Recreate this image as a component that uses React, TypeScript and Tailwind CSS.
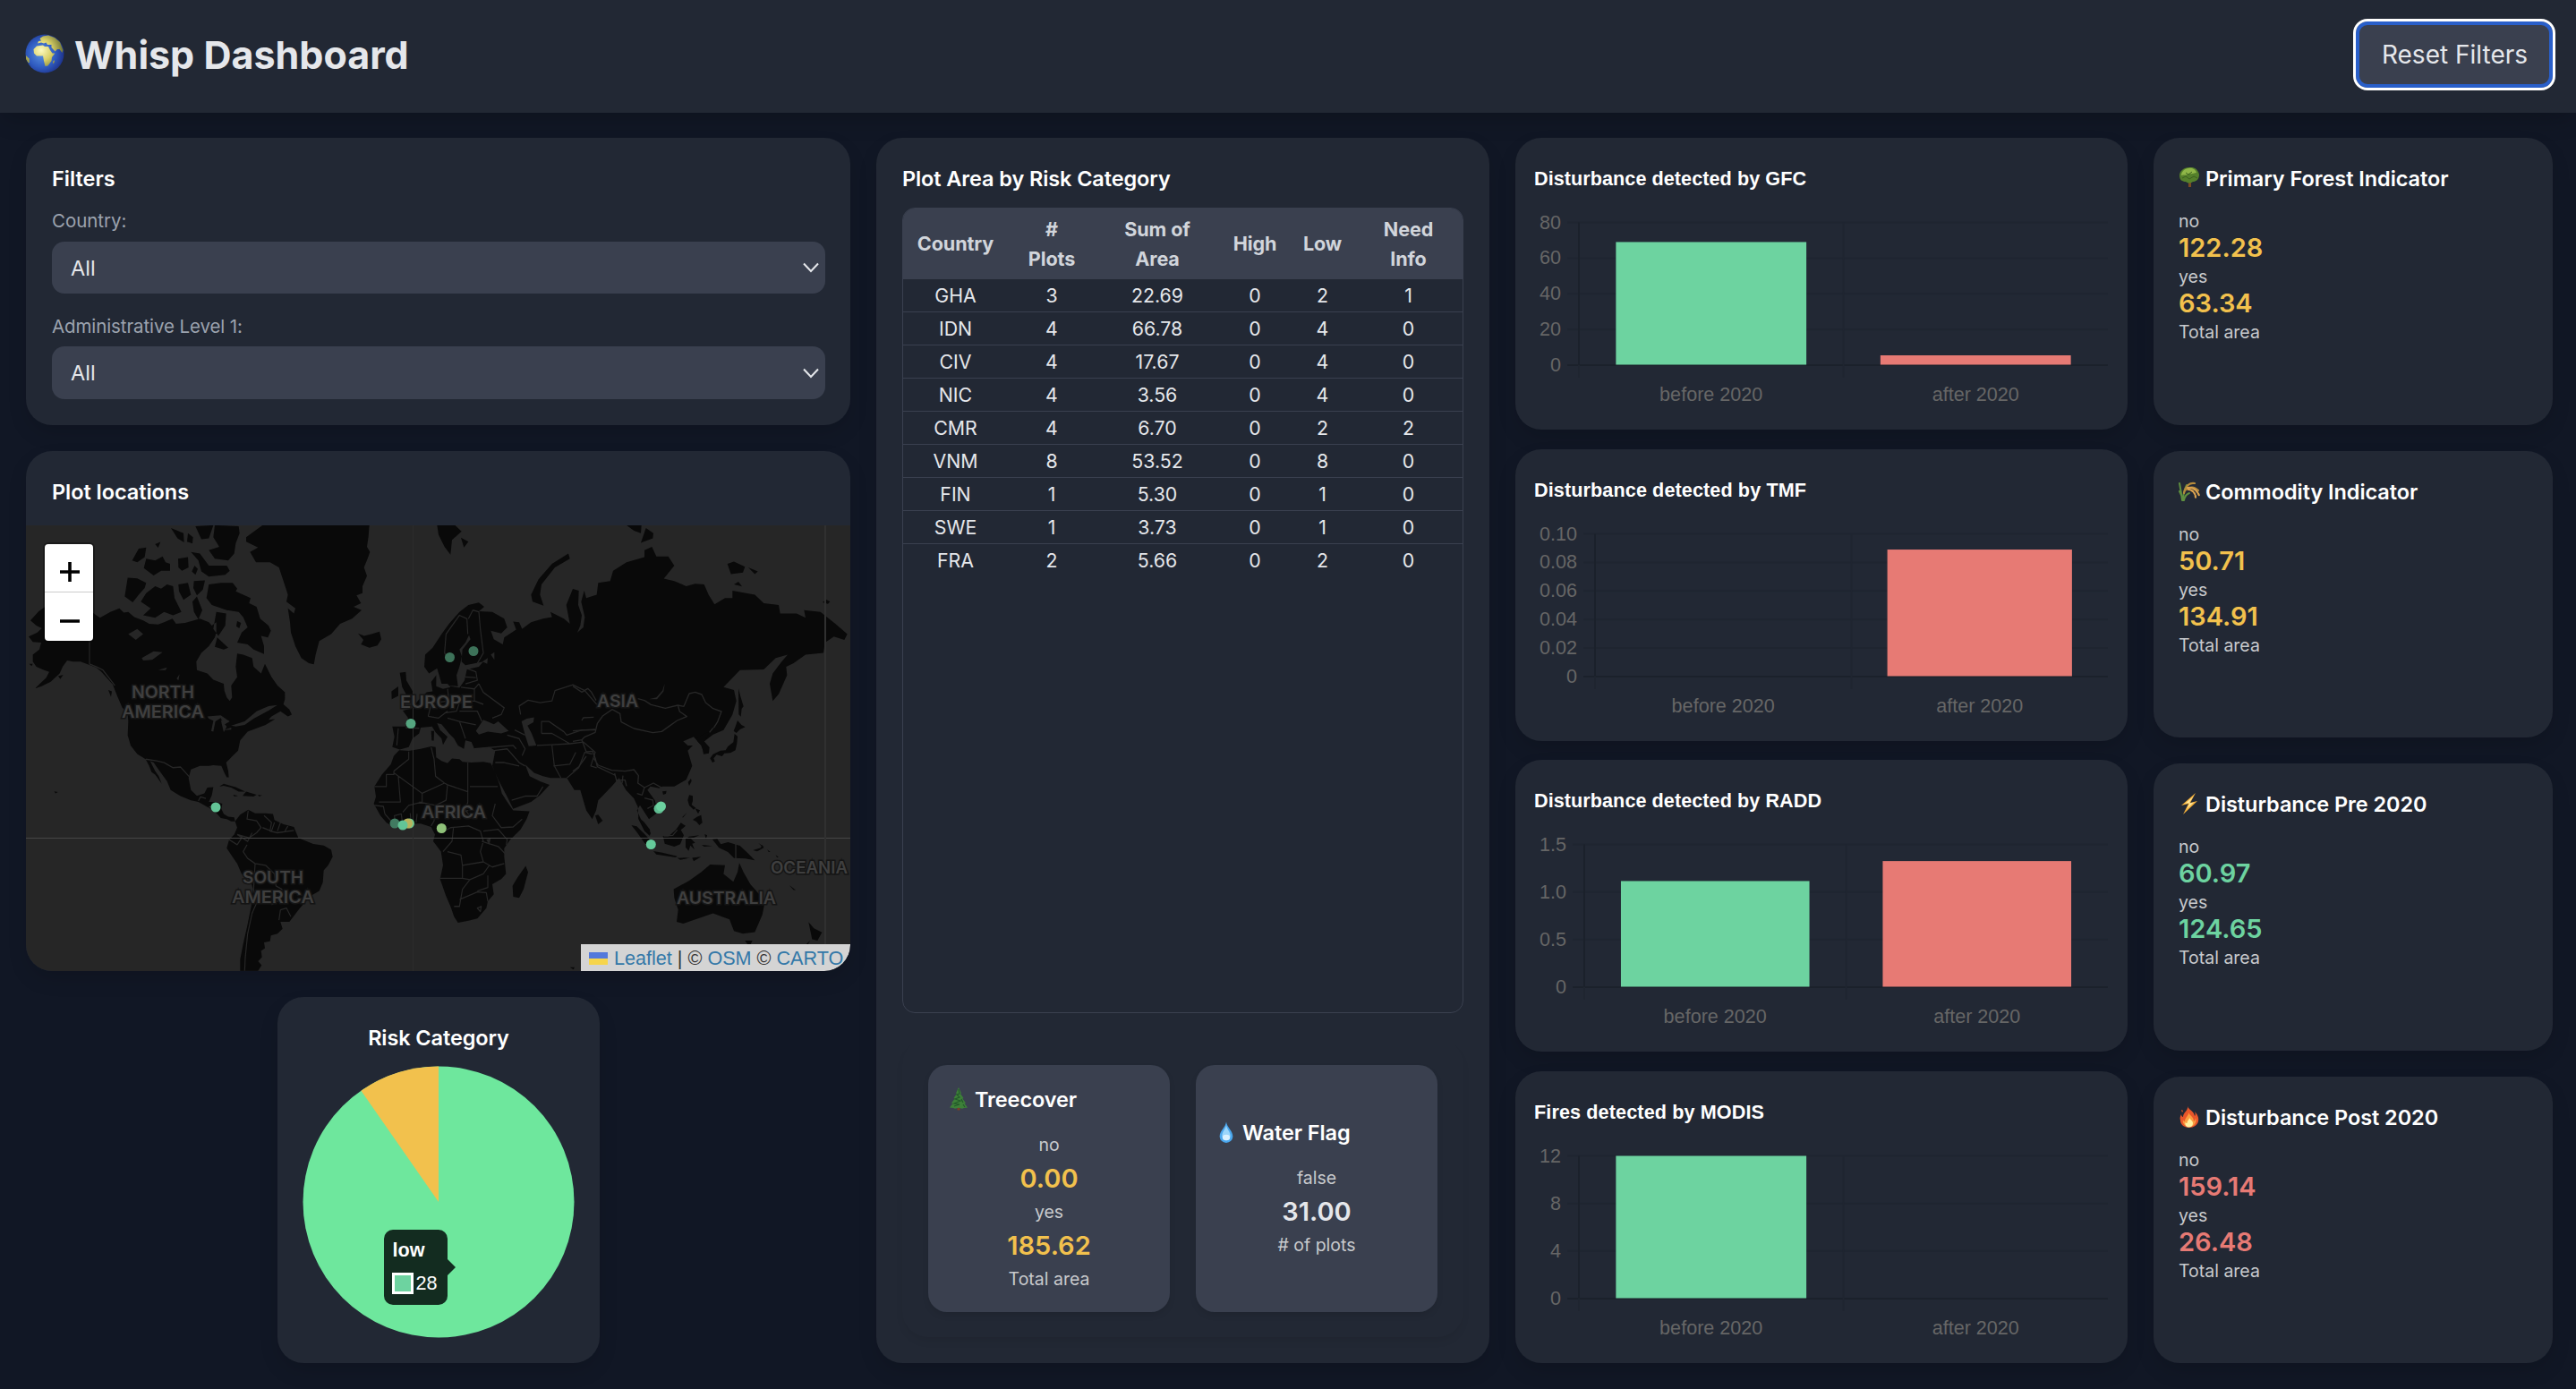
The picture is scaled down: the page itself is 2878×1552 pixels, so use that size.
import React from "react";

const CARD = "bg-[#222834] rounded-[29px] shadow-[0_10px_24px_-4px_rgba(0,0,0,0.16)]";

/* ---------- icons ---------- */

function Globe() {
  return (
    <svg viewBox="0 0 44 44" className="h-[44px] w-[44px] shrink-0">
      <defs>
        <radialGradient id="sea" cx="0.42" cy="0.5" r="0.6">
          <stop offset="0" stopColor="#5b93e0" />
          <stop offset="0.6" stopColor="#2f5bc0" />
          <stop offset="1" stopColor="#1c2f86" />
        </radialGradient>
        <radialGradient id="soil" gradientUnits="userSpaceOnUse" cx="18" cy="18" r="24">
          <stop offset="0" stopColor="#fcf9c0" />
          <stop offset="0.5" stopColor="#d9d067" />
          <stop offset="1" stopColor="#737838" />
        </radialGradient>
      </defs>
      <circle cx="22" cy="22" r="21.500" fill="url(#sea)" />
      <g fill="url(#soil)">
        <path d="M9.500 17L13 13.500 20 12.500 22 14 26 14 28 18 30.500 21.500 33.500 21.500 30 26 29.500 30 25.500 35.500 22.500 36 21 30 20 24.500 13 24.500 10 21.500z" />
        <path d="M14 10.500L15 8 18 7.500 16.500 5 20 2.500 26 1.500 33 4 39 9 42.500 18 41.500 21 38.500 17 36 17 33.500 19.500 29.500 15 29.500 12 25 12 23.500 9.500 21 10.500 18 9.500z" />
        <path d="M1 24L4.500 27.500 5 32 3.500 32 1 28z" />
        <path d="M32.500 29L33 31 31.500 33.500 31 31z" />
      </g>
    </svg>
  );
}

function Tree() {
  return (
    <svg viewBox="0 0 24 24" className="h-[24px] w-[24px]">
      <path d="M11 17h3v5h-3z" fill="#7a4a22" />
      <path d="M12 0c6-1 10 3 11 8 0 6-4 8-7 8-3 2-5 2-8 0-4 0-7-2-7-7C1 4 6 0 12 0z" fill="#55802b" />
      <path d="M11 1c5-1 8 2 9 5-3 0-5 2-8 1-3 2-6 1-9 2 0-4 4-8 8-8z" fill="#8fb648" />
      <path d="M4 12l4-2 4 3 5-3 4 2M8 6l3 2 4-3" stroke="#3c611f" strokeWidth="1" fill="none" />
    </svg>
  );
}

function Rice() {
  return (
    <svg viewBox="0 0 24 24" className="h-[24px] w-[24px]" fill="none" strokeLinecap="round">
      <path d="M4 22C3 14 2 8 1 3M5 22c0-7 1-11 4-17M5 22c-1-5-3-8-4-10M6 22c1-5 3-7 6-8" stroke="#5e8f3f" strokeWidth="2" />
      <path d="M6 14C8 5 13 2 18 3M7 11c6-5 11-4 15 0" stroke="#b58a3c" strokeWidth="2.200" />
      <path d="M10 8c6-1 11 3 13 9M11 10c4 0 8 4 8 9" stroke="#dca350" strokeWidth="2.200" strokeDasharray="2 1.6" />
    </svg>
  );
}

function Bolt() {
  return (
    <svg viewBox="0 0 24 24" className="h-[24px] w-[24px]">
      <path d="M19 0L3 14l8-2-6 12L21 9l-8 2z" fill="#f4b13c" />
      <path d="M16.500 4L7 12l6-1.500L9 18l8-7.500-6 1.500z" fill="#fde9a0" />
    </svg>
  );
}

function Fire() {
  return (
    <svg viewBox="0 0 24 24" className="h-[24px] w-[24px]">
      <path d="M10 0c1 4 7 5 8 11 1-1 1-3 0-5 3 3 5 7 4 11-1 4-5 7-10 7S2 21 2 16c-1-3 0-5 1-7 0 2 1 3 2 3C5 7 11 5 10 0z" fill="#e8562a" />
      <path d="M11 6c0 4 6 5 6 11 1-1 2-2 2-4 2 5-2 10-7 10-5 0-8-4-7-8 0 1 1 2 2 2 0-5 5-6 4-11z" fill="#fb9c3f" />
      <path d="M12 12c0 3 4 4 4 7s-2 4.500-4.500 4.500S7 22 7.500 18c1 1 1.500 1 2 1 0-3 3-4 2.500-7z" fill="#fff1a0" />
      <path d="M3 4l2 1-1 2z" fill="#e8562a" />
    </svg>
  );
}

function Pine() {
  return (
    <svg viewBox="0 0 24 26" className="h-[26px] w-[24px]">
      <path d="M10.500 20h3v5.500h-3z" fill="#7b3f26" />
      <path d="M12 0l3 6.500-1 .5 3.500 5-1.200.5 3.700 5-1.500.5 3.500 4.500-4 .5-2 .8-4-1-4 1-2-.8-4-.5L5.500 18 4 17.500l3.700-5L6.500 12 10 7 9 6.500z" fill="#3d8038" />
      <path d="M12 2l1 5-3 1 3 3-5 2 6 2-7 3 6 1-6 2M15 13l2 4M17 19l2 3" stroke="#23592a" strokeWidth="1.200" fill="none" />
    </svg>
  );
}

function Drop() {
  return (
    <svg viewBox="0 0 24 26" className="h-[25px] w-[22px]">
      <path d="M12 0c1 7 8 11 8 17.500A8 8 0 0 1 4 17.500C4 11 11 7 12 0z" fill="#4aa7ee" />
      <path d="M12 4c1 5 5 8 5 13a5 5.500 0 0 1-10 0c0-5 4-8 5-13z" fill="#9bd6fb" />
      <ellipse cx="12" cy="19" rx="4.500" ry="3.500" fill="#d9f1ff" />
    </svg>
  );
}

/* ---------- filters ---------- */

function SelectBox({ height }: { height: string }) {
  return (
    <div className={`${height} flex items-center justify-between rounded-[14px] bg-[#3a404f] pl-[21px] pr-[6px]`}>
      <span className="pt-[1px] text-[23.5px] text-[#e5e7eb]">All</span>
      <svg viewBox="0 0 20 12" className="h-[12px] w-[20px]">
        <path d="M2 1.500L10 10l8-8.500" fill="none" stroke="#e5e7eb" strokeWidth="2" />
      </svg>
    </div>
  );
}

function Filters() {
  return (
    <section className={`${CARD} h-[321px] pl-[29px] pr-[28px] pt-[28px]`}>
      <h2 className="h-[36px] text-[23.5px] font-semibold leading-[36px] text-white">Filters</h2>
      <p className="mt-[13px] h-[32px] text-[20.5px] leading-[32px] tracking-[-0.05px] text-[#9ca3af]">Country:</p>
      <div className="mt-[7px]"><SelectBox height="h-[58px]" /></div>
      <p className="mt-[21px] h-[32px] text-[20.5px] leading-[32px] tracking-[-0.1px] text-[#9ca3af]">Administrative Level 1:</p>
      <div className="mt-[6px]"><SelectBox height="h-[59px]" /></div>
    </section>
  );
}

/* ---------- map ---------- */

const LAND = [
  // North America
  "M90 466L70 478 42 505 62 520 80 528 65 540 36 552 50 568 78 570 72 590 50 605 50 625 62 640 88 650 105 655 95 672 58 703 78 698 110 684 140 660 150 640 165 622 185 625 210 625 240 635 262 642 280 655 300 675 318 692 325 708 335 730 350 760 368 775 370 800 368 840 378 870 400 895 428 910 440 930 448 948 460 955 482 982 472 960 460 945 443 915 455 920 475 945 500 975 512 1000 545 1018 580 1030 605 1035 625 1045 655 1060 668 1070 680 1082 700 1085 715 1092 728 1092 725 1080 705 1078 690 1070 682 1055 685 1040 665 1035 640 1035 650 1015 655 992 635 993 625 1010 600 1017 580 1000 572 965 580 940 610 930 640 930 655 928 682 930 692 950 700 963 707 963 705 945 698 920 720 900 738 885 745 855 770 830 800 820 830 810 862 793 840 795 850 785 880 770 905 785 918 780 910 765 890 750 895 735 895 715 870 695 850 670 828 632 815 660 790 640 785 615 755 605 735 602 730 640 735 670 715 695 718 730 710 740 700 730 692 710 690 690 655 678 635 660 600 650 598 625 615 600 640 580 660 555 665 540 665 510 650 520 640 510 610 500 590 505 560 512 530 515 518 500 490 510 470 517 440 515 420 505 390 495 370 480 355 482 340 470 310 480 275 497 250 482z",
  "M640 400L680 395 720 395 735 412 730 420 780 440 775 455 800 465 812 500 840 520 848 535 838 555 815 550 825 580 825 603 790 590 770 575 735 570 750 540 770 525 755 495 740 480 700 475 650 460 632 440z",
  "M430 425L460 405 480 412 500 400 520 405 525 440 548 480 520 490 490 480 460 497 420 490 445 470 412 450z",
  "M368 380L400 382 430 395 425 410 405 430 385 452 358 435z",
  "M660 227L740 230 743 250 730 280 725 310 705 330 660 325 640 300 675 290 655 262z",
  "M580 305L610 310 640 345 700 345 710 360 695 372 640 377 615 362 605 330z",
  "M383 330L405 295 430 292 425 320 400 335z",
  "M422 352L430 325 460 330 485 318 495 335 510 340 510 360 480 360 455 374z",
  "M537 325L570 320 572 350 550 360 538 350z",
  "M595 230L655 227 640 265 615 268z",
  "M513 235L555 250 557 277 535 265z",
  "M570 250L587 262 585 280 567 275z",
  "M460 282L478 276 470 293z",
  "M592 345L603 355 595 372 583 362z",
  "M538 400L570 395 580 430 555 445 540 420z",
  "M590 390L627 388 620 415 600 432 588 410z",
  "M585 450L600 435 618 475 605 502 590 480z",
  "M665 480L698 485 695 520 672 550 655 530z",
  "M668 555L705 585 690 590 660 582z",
  "M735 507L748 512 742 528 732 522z",
  "M303 708L315 712 312 728z",
  "M135 668L152 664 142 676z",
  "M38 632L50 632 46 638z",
  "M122 1004L134 1006 126 1010z",
  // Greenland, Iceland
  "M820 227L765 262 765 275 805 292 778 305 798 335 845 335 875 350 890 390 905 430 900 450 930 470 925 485 905 470 912 510 915 540 930 580 950 615 975 630 992 633 998 605 1010 565 1050 545 1080 515 1120 500 1152 475 1125 465 1150 455 1135 432 1155 425 1155 405 1170 375 1160 350 1172 325 1180 305 1170 290 1175 260 1178 227z",
  "M1140 543L1160 550 1185 545 1212 538 1218 560 1205 578 1178 585 1150 575 1158 562z",
  // Caribbean
  "M675 990L690 982 730 992 762 1005 740 1005 715 993 690 988z",
  "M765 1005L800 1014 790 1019 753 1017z",
  "M805 1014L818 1016 808 1019zM722 1014L738 1017 725 1019z",
  // South America
  "M728 1092L745 1072 772 1058 795 1068 830 1068 855 1070 860 1088 890 1100 925 1108 940 1140 990 1158 1025 1162 1050 1175 1055 1195 1040 1220 1025 1235 1022 1270 1010 1295 980 1310 960 1330 945 1345 910 1385 880 1385 887 1405 870 1420 848 1425 845 1442 825 1445 828 1462 815 1470 818 1488 805 1500 817 1512 805 1528 745 1528 745 1495 755 1450 768 1400 782 1340 788 1290 780 1265 750 1245 735 1215 715 1190 700 1170 708 1145 725 1130 735 1110z",
  // Africa, Madagascar
  "M1278 884L1310 886 1350 880 1385 873 1400 875 1402 905 1420 915 1440 922 1455 908 1480 910 1490 918 1520 920 1560 918 1585 922 1600 950 1615 985 1622 1010 1640 1035 1660 1060 1715 1062 1705 1085 1685 1115 1650 1145 1630 1170 1630 1195 1636 1245 1620 1260 1590 1275 1595 1305 1575 1325 1570 1345 1540 1375 1510 1382 1475 1388 1462 1370 1450 1340 1435 1310 1415 1260 1425 1220 1418 1180 1392 1150 1398 1130 1385 1108 1350 1098 1320 1098 1290 1105 1262 1110 1235 1095 1215 1075 1193 1040 1200 1020 1195 990 1220 955 1250 925 1260 900z",
  "M1702 1222L1710 1240 1695 1290 1680 1315 1660 1312 1658 1280 1675 1255z",
  // Eurasia
  "M1255 875L1262 845 1255 815 1300 815 1308 790 1290 768 1320 762 1345 735 1370 715 1390 712 1385 685 1402 665 1402 697 1425 705 1450 700 1440 690 1420 690 1412 665 1405 645 1378 660 1362 640 1365 605 1390 585 1420 545 1445 515 1480 480 1510 460 1545 453 1563 465 1545 478 1590 480 1630 500 1640 525 1620 543 1585 535 1595 560 1625 575 1630 555 1655 540 1670 532 1660 508 1680 510 1690 530 1720 510 1760 500 1790 495 1785 480 1830 500 1850 515 1838 460 1860 413 1880 418 1878 460 1890 490 1885 520 1875 540 1895 525 1900 495 1888 450 1898 418 1905 440 1940 430 1945 395 1985 390 1995 360 2040 335 2100 320 2100 300 2125 290 2140 318 2180 318 2200 345 2165 383 2200 390 2240 405 2270 398 2300 400 2315 430 2335 458 2370 440 2395 440 2395 418 2470 430 2500 455 2550 460 2555 485 2610 485 2640 497 2635 475 2690 480 2740 515 2780 545 2770 562 2735 552 2705 570 2700 600 2640 605 2600 630 2575 640 2578 665 2550 720 2530 740 2520 690 2530 660 2560 625 2580 605 2540 615 2500 648 2420 650 2365 700 2400 708 2408 740 2395 780 2365 825 2330 838 2295 862 2315 890 2300 893 2290 870 2265 845 2230 858 2245 870 2262 870 2245 885 2260 930 2240 970 2200 990 2160 990 2150 995 2120 990 2110 1000 2135 1030 2145 1065 2115 1085 2100 1065 2085 1045 2075 1060 2090 1090 2120 1125 2118 1134 2100 1120 2080 1085 2078 1050 2065 1025 2038 1000 2015 965 1990 990 1945 1030 1938 1060 1925 1085 1905 1060 1885 1000 1865 1000 1840 965 1785 965 1760 960 1730 950 1700 925 1715 960 1750 975 1782 985 1750 1015 1720 1035 1660 1055 1640 1020 1610 970 1590 930 1600 885 1580 875 1530 880 1520 860 1500 855 1495 880 1475 870 1462 850 1445 835 1420 808 1405 805 1415 825 1440 845 1425 868 1420 850 1400 832 1388 815 1350 818 1345 835 1322 850 1310 875 1280 882z",
  "M1280 658L1300 655 1302 680 1325 715 1325 735 1288 745 1302 722 1288 700z",
  "M1252 712L1275 698 1275 725 1253 735z",
  "M1385 828L1395 828 1394 856 1387 856z",
  "M1720 430L1745 385 1790 340 1845 310 1850 325 1800 350 1755 400 1750 430 1762 462 1725 450z",
  "M1405 227L1465 227 1487 245 1455 270 1450 313 1430 290 1410 255z",
  "M1485 263L1510 275 1495 292z",
  "M2040 227L2090 227 2088 250 2065 243z",
  "M2105 235L2130 250 2128 265 2088 278z",
  "M2378 340L2400 333 2437 348 2430 365 2390 370zM2448 350L2480 362 2470 370zM2400 400L2415 392 2427 406zM2697 452L2710 444 2722 450 2715 457z",
  "M1935 1075L1945 1072 1960 1090 1945 1100z",
  // Oceania
  "M2210 1198L2245 1200 2220 1204zM2260 1198L2290 1195 2265 1208z",
  "M2198 1290L2250 1265 2290 1240 2320 1218 2370 1220 2365 1245 2398 1268 2412 1240 2418 1213 2432 1240 2455 1275 2490 1310 2502 1335 2495 1365 2470 1415 2430 1420 2400 1412 2385 1378 2360 1370 2330 1360 2280 1375 2230 1390 2208 1385 2213 1350 2200 1315z",
  "M2437 1440L2462 1440 2452 1458z",
  "M2650 1386L2668 1404 2695 1416 2680 1440 2662 1436zM2655 1440L2640 1465 2600 1500 2625 1465z",
  "M2585 1278L2607 1292 2600 1292z",
  "M1850 1518L1866 1518 1862 1524z",
].join("");

// Japan, Korea, the Philippines, Indonesia and New Guinea
const EAST_ISLANDS = [
  "M552 135L565 150 578 157 560 165 548 177 539 170 545 155z",
  "M542 180L552 188 550 212 545 235 528 244 508 245 500 255 482 250 472 262 476 272 468 276 460 262 470 248 495 236 512 235 520 222 538 208z",
  "M555 28L562 55 572 88 566 95 563 122 556 115z",
  "M415 195L440 180 462 170 440 205 458 225 456 245 438 248 433 220 418 205z",
  "M396 330L398 338 390 354 386 342z",
  "M300 373L314 371 312 380 303 384z",
  "M390 385L402 388 402 405 398 418 412 428 405 434 390 420 385 402z",
  "M410 430L426 436 420 448zM402 468L416 458 430 452 434 478 424 486 414 474zM366 460L382 444 370 460z",
  "M196 486L214 490 240 515 258 535 262 566 240 545 215 510z",
  "M218 458L238 475 258 500 260 517 245 508 234 490z",
  "M270 573L300 578 350 590 345 594 280 584z",
  "M302 522L320 524 345 502 362 478 378 488 362 502 372 520 360 550 340 558 308 548z",
  "M378 532L390 524 424 520 396 532 410 545 400 548 408 568 394 554 388 572 378 560z",
  "M442 516L450 520 446 534zM432 552L468 556 440 558z",
  "M468 534L484 532 496 550 520 543 560 555 585 578 610 604 578 598 540 596 520 576 490 562z",
  "M604 570L630 562 634 552 640 562 618 574zM622 546L640 558 636 560zM652 568L662 576 656 576zM680 586L690 594 684 594z",
  "M360 596L395 594 362 600z",
].join("");

const WATER = [
  "M1440 695L1475 697 1470 665 1480 640 1488 610 1480 590 1500 570 1512 548 1517 560 1490 590 1487 625 1500 636 1560 625 1545 640 1505 648 1497 680 1480 702z",
  "M1535 828L1560 795 1580 802 1595 808 1610 800 1645 828 1620 835 1575 830 1545 838z",
  "M1688 800L1705 792 1730 788 1728 802 1708 812 1722 835 1738 870 1712 872 1700 840z",
  "M2115 735L2140 730 2160 710 2168 690 2164 712 2142 735z",
  "M1557 625L1575 615 1573 632zM1585 605L1597 598 1597 620z",
  "M370 545L400 530 420 545 395 562zM415 615L455 595 485 598 450 620 420 622zM470 650L500 642 495 650zM532 675L542 662 538 680z",
  "M635 785L680 782 710 800 690 810 680 790 662 800 655 830 648 828 655 798 640 792zM680 795L700 815 690 832zM690 825L715 818 715 824z",
  "M715 812L760 800 800 770 840 755 870 752 840 768 815 780 790 792 760 810 730 815z",
  "M1570 1145L1585 1140 1580 1160z",
].join("");

const BORDERS = [
  "M240 560V632L262 640 285 650 325 695 M428 910L465 915 490 920 520 935 545 933 575 962 M605 1032L612 1020 630 1025 M640 1050L665 1045",
  // South America
  "M772 1060L768 1085 800 1090 815 1110 800 1125 775 1140 735 1130 M768 1160L755 1180 770 1200 795 1215 830 1220 860 1245 865 1280 885 1290 880 1320 850 1335 M735 1130L770 1150 785 1125 M795 1215L790 1290 800 1330 785 1360 770 1420 762 1490 760 1528 M820 1110L850 1120 860 1095 M870 1120L880 1095 M895 1120L905 1105 M825 1075L850 1095 845 1120 870 1125 925 1118 M708 1145L735 1160 750 1140 M880 1350L900 1345 915 1370 M880 1350L875 1380",
  // Africa
  "M1310 888V910L1260 945 M1260 945V955H1235V990H1195 M1260 950L1355 1010 M1275 960L1282 1035H1210 M1355 1010V1035L1310 1045 1290 1065 M1355 1010L1430 980 M1385 875L1395 910 1400 960 1430 980 1440 985 1508 1005V920 M1515 990H1608 M1440 985L1435 1030 1400 1045 1345 1035 M1508 1005V1035L1500 1060 1520 1080 M1195 1045L1225 1048 1230 1070 M1230 1070L1250 1090 M1265 1105L1262 1075 1285 1070 1290 1105 M1318 1098L1315 1068 M1335 1095L1338 1070 M1400 1045L1395 1090 1385 1105 M1440 1075L1480 1065 1510 1060 M1420 1125L1450 1110 1510 1105 1550 1120 1560 1150 1550 1180 1560 1210 1490 1220 1485 1190 1440 1180 M1425 1180L1455 1150 1460 1110 M1600 1040L1590 1075 1620 1110 1660 1108 1690 1085 M1560 1120L1610 1115 1640 1145 1637 1160 M1555 1150L1610 1165 1632 1185 M1560 1210L1590 1225 1630 1215 M1415 1258H1490L1515 1262 1490 1290 1480 1340 1462 1340 M1490 1220V1258 M1515 1262L1560 1245 1580 1220 M1540 1295L1575 1285 1575 1250 M1480 1320L1540 1298 1570 1300 1575 1325 M1540 1345L1553 1340 1550 1355z",
  // Europe
  "M1445 620L1430 600 1435 545 1480 490 1505 500 1508 545 M1510 500L1525 475 1545 480 1550 530 1560 600 1540 630 M1505 645L1535 655 1540 680 1500 690 M1500 670L1535 672 M1485 700L1530 705 1545 690 M1530 705L1530 740 1480 745 M1545 690L1560 715 1630 760 1620 780 1590 790 M1530 740L1560 750 M1440 705L1445 740 1400 745 M1370 720L1385 750 1375 785 M1480 745L1470 770 1430 775 M1480 770L1540 770 1555 800 M1300 818L1345 820 M1275 820L1270 870 M1440 790L1480 800 1500 850 M1480 800L1535 810 M1375 785L1410 790 1440 770",
  // Asia west of Mongolia, the Gulf and the subcontinent
  "M1685 780L1680 755 1710 738 1750 745 1790 740 1800 710 1860 693 1900 710 1940 750 M1755 835V800H1780L1830 830 1840 840 1890 825 1935 825 M1755 835L1790 835 1850 865 M1740 870L1790 868 1850 865 1895 860 1935 890 1920 930 1940 935 M1790 870L1798 930 1820 965 M1795 930L1850 925 1870 890 M1840 965L1880 935 1900 890 1925 895 M1640 840L1680 850 1700 880 1690 900 M1530 880L1660 870 1670 880 M1595 885L1640 880 1680 920 1700 930 M1600 920L1630 920 1680 930 M1655 1030L1700 1018 1740 1018 1760 990 M1665 825L1700 840",
].join("");

// Mongolia, China, Nepal and Indochina
const EAST_BORDERS =
  "M0 20L30 40 50 28 62 40 78 68 M218 62L240 68 262 82 310 94 352 84 372 88 390 45 410 40 432 48 445 75 470 95 498 105 485 140 472 160 M352 84L358 105 382 122 350 135 322 155 298 172 268 176 205 162 162 140 158 112 132 98 100 120 82 145 75 175 40 190 30 200 0 205 M30 135L35 126 70 124 M0 170L75 165 M30 200L45 240 66 238 M70 262L85 285 130 302 175 305 M66 238L76 265 82 290 140 318 M0 305L20 290 45 255 M140 312L150 350 165 345 168 320 M175 305L205 300 220 320 218 345 240 360 M145 335L175 335 180 355 M240 360L270 345 300 362 M240 360L232 385 215 380 M262 375L285 400 M240 395L268 402 270 420 250 430 M305 522L335 520 350 502M546 548V600 M458 175L470 160";

type MapLabel = [string, number, number, number];
const MAP_LABELS: MapLabel[] = [
  ["NORTH", 147, 780, 70],
  ["AMERICA", 136, 802, 92],
  ["EUROPE", 447, 791, 81],
  ["ASIA", 667, 790, 46],
  ["AFRICA", 471, 914, 72],
  ["SOUTH", 271, 987, 68],
  ["AMERICA", 259, 1009, 92],
  ["OCEANIA", 861, 976, 86],
  ["AUSTRALIA", 756, 1010, 111],
];

type Plot = [number, number, string];
const PLOTS: Plot[] = [
  [241, 902, "#63c597"],
  [459, 808.5, "#55a680"],
  [502.5, 734.5, "#3d7259"],
  [529, 727.5, "#3d7259"],
  [441, 920, "#417b61"],
  [457.5, 920, "#72c98e"],
  [455.5, 920, "#b8b45d"],
  [450, 922, "#63c597"],
  [493.3, 925.5, "#8fc179"],
  [736, 903.5, "#5fbb90"],
  [738.5, 901, "#6bd19f"],
  [727.3, 943.5, "#65ca9a"],
];

function WorldMap() {
  return (
    <div className="relative mt-[19px] h-[498px] overflow-hidden rounded-b-[29px] bg-[#262626]">
      <svg viewBox="29 587 921 498" className="block h-[498px] w-[921px]">
        <g transform="translate(20 500) scale(0.333333 0.382653)">
          <path d={LAND} fill="#090909" />
          <path d={WATER} fill="#262626" />
          <path d={BORDERS} fill="none" stroke="#272727" strokeWidth="3.500" strokeLinejoin="round" />
        </g>
        <g transform="translate(640 760) scale(0.333333)">
          <path d={EAST_ISLANDS} fill="#090909" />
          <path d={EAST_BORDERS} fill="none" stroke="#272727" strokeWidth="4" strokeLinejoin="round" />
        </g>
        <path d="M29 936.500H950" stroke="#454545" strokeWidth="1" />
        <path d="M461.500 587V1085" stroke="#2c2c2c" strokeWidth="1" />
        <path d="M922 587V1085" stroke="#303030" strokeWidth="2" />
        {MAP_LABELS.map(([label, x, y, w]) => (
          <text key={label + y} x={x} y={y} textLength={w} lengthAdjust="spacingAndGlyphs" fontFamily="Inter, sans-serif" fontSize="18.5" fontWeight="600" fill="#3f3f3f" stroke="#151515" strokeWidth="3" paintOrder="stroke">
            {label}
          </text>
        ))}
        {PLOTS.map(([x, y, c]) => (
          <circle key={`${x}-${y}`} cx={x} cy={y} r="5.500" fill={c} />
        ))}
      </svg>
      <div className="absolute left-[21px] top-[21px] flex w-[54px] flex-col rounded-[4px] bg-white shadow-[0_0_0_2px_rgba(0,0,0,0.3)]">
        <div className="flex h-[54px] items-center justify-center border-b border-[#ccc] pl-[1px] pt-[9px]">
          <svg viewBox="0 0 24 24" className="h-[24px] w-[24px]"><path d="M12 1v22M1 12h22" stroke="#000" strokeWidth="3.600" /></svg>
        </div>
        <div className="flex h-[54px] items-center justify-center pl-[1px] pt-[9px]">
          <svg viewBox="0 0 24 24" className="h-[24px] w-[24px]"><path d="M1 12h22" stroke="#000" strokeWidth="3.600" /></svg>
        </div>
      </div>
      <div className="absolute bottom-0 right-0 flex h-[30px] w-[301px] items-center whitespace-nowrap bg-[#d4d4d4] pl-[9px] pt-[2px] font-['Liberation_Sans',Arial,sans-serif] text-[21.6px] text-[#333]">
        <svg viewBox="0 0 21 14" className="mr-[7px] h-[14px] w-[21px]">
          <path d="M0 0h21v7H0z" fill="#5379dc" />
          <path d="M0 7h21v7H0z" fill="#f6d54c" />
        </svg>
        <span>
          <span className="text-[#3278a8]">Leaflet</span> | © <span className="text-[#3278a8]">OSM</span> © <span className="text-[#3278a8]">CARTO</span>
        </span>
      </div>
    </div>
  );
}

function PlotLocations() {
  return (
    <section className={`${CARD} mt-[29px] h-[581px] overflow-hidden pt-[28px]`}>
      <h2 className="h-[36px] px-[29px] text-[23.5px] font-semibold leading-[36px] tracking-[-0.05px] text-white">Plot locations</h2>
      <WorldMap />
    </section>
  );
}

/* ---------- pie ---------- */

function RiskPie() {
  const r = 151.5;
  const c = 152;
  const angle = (3 / 31) * Math.PI * 2;
  const x = c - r * Math.sin(angle);
  const y = c - r * Math.cos(angle);
  return (
    <section className={`${CARD} mx-auto mt-[29px] flex h-[409px] w-[360px] flex-col items-center pt-[28px]`}>
      <h2 className="h-[36px] pl-[1px] text-[23.5px] font-semibold leading-[36px] tracking-[-0.1px] text-white">Risk Category</h2>
      <div className="relative mt-[13px]">
        <svg viewBox="0 0 304 304" className="block h-[304px] w-[304px]">
          <circle cx={c} cy={c} r={r} fill="#6ee79d" />
          <path d={`M${c} ${c}L${x} ${y}A${r} ${r} 0 0 1 ${c} ${c - r}z`} fill="#f2c14d" />
        </svg>
        <div className="absolute left-[91px] top-[183px] flex h-[84px] w-[71px] flex-col rounded-[10px] bg-[#132c20] pl-[9px] pt-[9px] font-['Liberation_Sans',Arial,sans-serif] text-[21.6px] text-white">
          <span className="pl-[1px] font-bold leading-[28px]">low</span>
          <span className="mt-[11px] flex items-center leading-[24px]">
            <span className="mr-[3px] h-[24px] w-[24px] border-[3px] border-white bg-[#6dd3a0]" />
            28
          </span>
          <svg viewBox="0 0 9 18" className="absolute left-[71px] top-[33px] h-[18px] w-[9px]"><path d="M0 0L9 9 0 18z" fill="#132c20" /></svg>
        </div>
      </div>
    </section>
  );
}

/* ---------- table ---------- */

const HEAD = ["Country", "#\nPlots", "Sum of\nArea", "High", "Low", "Need\nInfo"];
const ROWS = [
  ["GHA", "3", "22.69", "0", "2", "1"],
  ["IDN", "4", "66.78", "0", "4", "0"],
  ["CIV", "4", "17.67", "0", "4", "0"],
  ["NIC", "4", "3.56", "0", "4", "0"],
  ["CMR", "4", "6.70", "0", "2", "2"],
  ["VNM", "8", "53.52", "0", "8", "0"],
  ["FIN", "1", "5.30", "0", "1", "0"],
  ["SWE", "1", "3.73", "0", "1", "0"],
  ["FRA", "2", "5.66", "0", "2", "0"],
];
const COLS = "grid grid-cols-[117px_98px_138px_80px_71px_1fr]";

function RiskTable() {
  return (
    <div className="mt-[14px] h-[900px] overflow-hidden rounded-[14px] border border-[#3a404f]">
      <div className={`${COLS} h-[79px] items-center bg-[#3a404f] text-center text-[21.6px] font-bold leading-[33px] tracking-[-0.1px] text-[#d1d5db]`}>
        {HEAD.map((h) => (
          <span key={h} className="whitespace-pre-line">{h}</span>
        ))}
      </div>
      {ROWS.map((row, i) => (
        <div key={row[0]} className={`${COLS} h-[37px] items-center text-center text-[21.3px] text-[#e5e7eb] ${i < ROWS.length - 1 ? "border-b border-[#3a404f] pt-[2px]" : "pt-[1px]"}`}>
          {row.map((cell, j) => (
            <span key={j}>{cell}</span>
          ))}
        </div>
      ))}
    </div>
  );
}

function FlagCard({ icon, title, children }: { icon: React.ReactNode; title: string; children: React.ReactNode }) {
  return (
    <div className="flex h-[276px] w-[270px] flex-col justify-center rounded-[21px] bg-[#3a404f] px-[22px] pt-[3px] shadow-[0_4px_8px_-2px_rgba(0,0,0,0.13)]">
      <h3 className="flex h-[36px] items-center text-[23.5px] font-semibold leading-[36px] tracking-[-0.1px] text-white">
        <span className="mr-[6px] flex w-[24px] justify-center pb-[2px]">{icon}</span>
        {title}
      </h3>
      <div className="mt-[13px] flex flex-col items-center">{children}</div>
    </div>
  );
}

function Small({ children }: { children: React.ReactNode }) {
  return <span className="text-[19.5px] leading-[38px] text-[#c8cacd]">{children}</span>;
}

function MiddleColumn() {
  return (
    <section className={`${CARD} h-[1369px] w-[685px] shrink-0 pl-[29px] pr-[29px] pt-[28px]`}>
      <h2 className="h-[36px] text-[23.5px] font-semibold leading-[36px] tracking-[-0.1px] text-white">Plot Area by Risk Category</h2>
      <RiskTable />
      <div className="mt-[29px] flex h-[333px] items-center justify-between rounded-[29px] px-[29px] shadow-[0_6px_12px_-4px_rgba(0,0,0,0.1)]">
        <FlagCard icon={<Pine />} title="Treecover">
          <Small>no</Small>
          <span className="text-[29px] font-semibold leading-[37px] text-[#f2c14d]">0.00</span>
          <Small>yes</Small>
          <span className="text-[29px] font-semibold leading-[37px] text-[#f2c14d]">185.62</span>
          <Small>Total area</Small>
        </FlagCard>
        <FlagCard icon={<Drop />} title="Water Flag">
          <Small>false</Small>
          <span className="text-[29px] font-semibold leading-[37px] text-[#e5e7eb]">31.00</span>
          <Small># of plots</Small>
        </FlagCard>
      </div>
    </section>
  );
}

/* ---------- bar charts ---------- */

type Chart = { title: string; titleWidth: number; axis: number; ticks: string[]; max: number; values: [number, number] };
const CHARTS: Chart[] = [
  { title: "Disturbance detected by GFC", titleWidth: 304, axis: 71, ticks: ["0", "20", "40", "60", "80"], max: 80, values: [69, 5.5] },
  { title: "Disturbance detected by TMF", titleWidth: 304, axis: 89, ticks: ["0", "0.02", "0.04", "0.06", "0.08", "0.10"], max: 0.1, values: [0, 0.089] },
  { title: "Disturbance detected by RADD", titleWidth: 321, axis: 77, ticks: ["0", "0.5", "1.0", "1.5"], max: 1.5, values: [1.115, 1.325] },
  { title: "Fires detected by MODIS", titleWidth: 257, axis: 71, ticks: ["0", "4", "8", "12"], max: 12, values: [12, 0] },
];

const TOP = 94.5;
const BASE = 254;
const RIGHT = 662;

function BarChart({ title, titleWidth, axis, ticks, max, values }: Chart) {
  const cat = (RIGHT - axis) / 2;
  return (
    <section className={`${CARD} h-[326px]`}>
      <svg viewBox="0 0 684 326" className="block h-[326px] w-[684px]" fontFamily="'Liberation Sans', Arial, sans-serif" fontSize="21.6">
        <text x="21" y="53" fontWeight="700" fill="#fff" textLength={titleWidth}>{title}</text>
        {ticks.map((t, i) => {
          const y = BASE - ((BASE - TOP) * i) / (ticks.length - 1);
          return (
            <g key={t}>
              <path d={`M${axis - 13} ${y}H${RIGHT}`} stroke={i === 0 ? "#1b212b" : "#1f2530"} strokeWidth="2" />
              <text x={axis - 20} y={y + 7} textAnchor="end" fill="#666">{t}</text>
            </g>
          );
        })}
        <path d={`M${axis} ${TOP}V${BASE}`} stroke="#1b212b" strokeWidth="2" />
        <path d={`M${axis} ${BASE}V268M${axis + cat} ${TOP}V268`} stroke="#1f2530" strokeWidth="2" />
        {values.map((v, i) => {
          const h = (v / max) * (BASE - TOP);
          return v > 0 ? (
            <rect key={i} x={axis + cat * (i + 0.14)} y={BASE - h} width={cat * 0.72} height={h - 0.5} fill={i ? "#e77a74" : "#6dd3a0"} />
          ) : null;
        })}
        <text x={axis + cat * 0.5} y="294" textAnchor="middle" fill="#666">before 2020</text>
        <text x={axis + cat * 1.5} y="294" textAnchor="middle" fill="#666">after 2020</text>
      </svg>
    </section>
  );
}

/* ---------- indicators ---------- */

const INDICATORS = [
  { icon: <Tree />, title: "Primary Forest Indicator", no: "122.28", yes: "63.34", color: "text-[#f2c14d]" },
  { icon: <Rice />, title: "Commodity Indicator", no: "50.71", yes: "134.91", color: "text-[#f2c14d]" },
  { icon: <Bolt />, title: "Disturbance Pre 2020", no: "60.97", yes: "124.65", color: "text-[#6dd3a0]" },
  { icon: <Fire />, title: "Disturbance Post 2020", no: "159.14", yes: "26.48", color: "text-[#e77a74]" },
];

function Indicator({ icon, title, no, yes, color }: (typeof INDICATORS)[number]) {
  const small = "h-[31px] text-[19.5px] leading-[31px] text-[#c8cacd]";
  const big = `${color} h-[31px] text-[29px] font-semibold leading-[28px]`;
  return (
    <section className={`${CARD} flex flex-col pl-[28px] pt-[28px]`}>
      <h2 className="flex h-[36px] items-center text-[23.5px] font-semibold leading-[36px] tracking-[-0.06px] text-white">
        <span className="mr-[6px] pb-[2px]">{icon}</span>
        {title}
      </h2>
      <div className="mt-[14px] flex flex-col">
        <span className={small}>no</span>
        <span className={big}>{no}</span>
        <span className={small}>yes</span>
        <span className={big}>{yes}</span>
        <span className={small}>Total area</span>
      </div>
    </section>
  );
}

/* ---------- page ---------- */

export default function App() {
  return (
    <div className="h-[1552px] w-[2878px] overflow-hidden bg-[#111725] font-['Inter',sans-serif]">
      <header className="flex h-[126px] items-center justify-between bg-[#222834] pb-[4px] pl-[28px] pr-[26px] shadow-[0_10px_24px_-4px_rgba(0,0,0,0.2)]">
        <h1 className="flex items-center text-[43px] font-bold text-[#e5e7eb]">
          <span className="mr-[11px] pb-[2px]"><Globe /></span>
          Whisp Dashboard
        </h1>
        <button className="h-[74px] w-[220px] rounded-[13px] border-[4px] border-[#295fca] bg-[#3a404f] pl-[1px] text-[28px] text-[#e5e7eb] outline-[3px] outline-white">
          Reset Filters
        </button>
      </header>
      <main className="flex gap-[29px] pl-[29px] pr-[26px] pt-[28px]">
        <div className="w-[921px] shrink-0">
          <Filters />
          <PlotLocations />
          <RiskPie />
        </div>
        <MiddleColumn />
        <div className="flex h-[1369px] w-[684px] shrink-0 flex-col justify-between">
          {CHARTS.map((c) => (
            <BarChart key={c.title} {...c} />
          ))}
        </div>
        <div className="grid h-[1369px] w-[446px] shrink-0 grid-rows-4 gap-[29px]">
          {INDICATORS.map((p) => (
            <Indicator key={p.title} {...p} />
          ))}
        </div>
      </main>
    </div>
  );
}
